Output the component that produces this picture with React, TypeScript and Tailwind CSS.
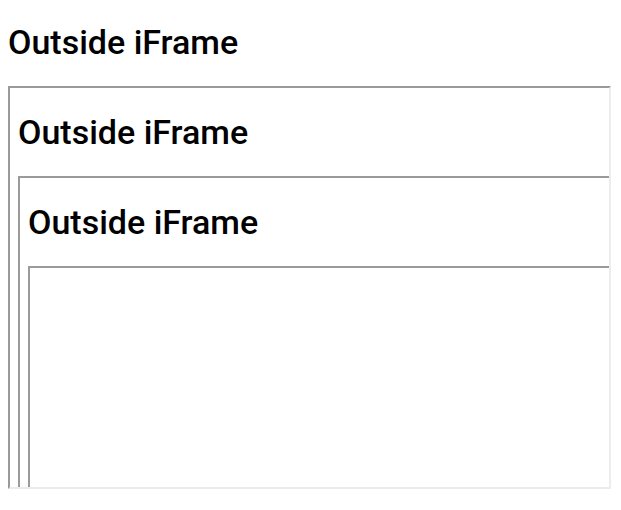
import React from 'react';

const FONT = { fontFamily: 'Roboto, "Liberation Sans", Arial, sans-serif' };

// A fake iframe: inset border, fixed size, clips whatever it holds
const Frame: React.FC<{ children?: React.ReactNode }> = ({ children }) => (
  <div className="w-[603px] h-[403px] shrink-0 overflow-hidden bg-white border-2 border-t-[#9a9a9a] border-l-[#9a9a9a] border-r-[#ececec] border-b-[#ececec]">
    {children}
  </div>
);

const Page: React.FC<{ depth: number; top?: boolean }> = ({ depth, top }) => (
  <div className="px-2 w-max">
    <h2
      className={`${top ? 'mt-[22px]' : 'mt-6'} mb-6 h-10 text-[34px] leading-10 font-medium text-black whitespace-nowrap`}
      style={FONT}
    >
      Outside iFrame
    </h2>
    <Frame>{depth > 0 ? <Page depth={depth - 1} /> : null}</Frame>
  </div>
);

export default function App() {
  return (
    <div className="w-[621px] h-[510px] overflow-hidden bg-white">
      <Page depth={2} top />
    </div>
  );
}
